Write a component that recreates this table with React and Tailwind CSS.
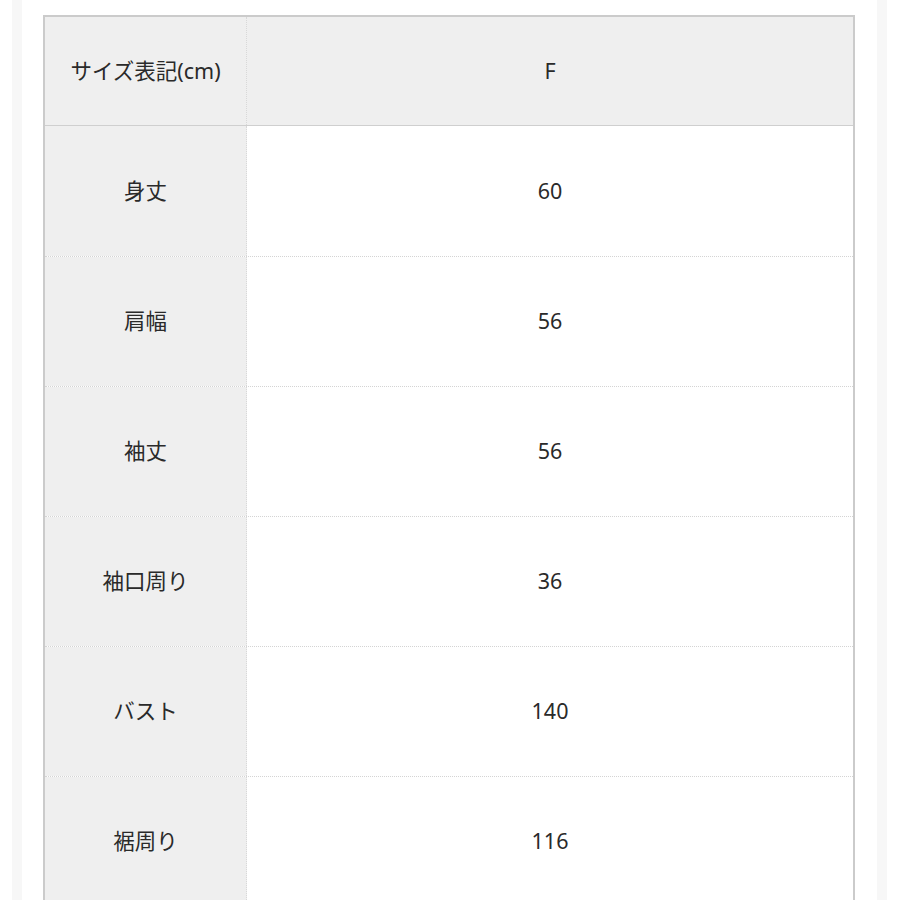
import React from 'react';

const rows = [
  ['身丈', '60'],
  ['肩幅', '56'],
  ['袖丈', '56'],
  ['袖口周り', '36'],
  ['バスト', '140'],
  ['裾周り', '116'],
];

const App = () => {
  return (
    <div
      className="w-[900px] min-h-[900px] bg-white pl-[12px] text-[#2a2a2a]"
      style={{ fontFamily: '"Noto Sans", "Noto Sans CJK JP", sans-serif' }}
    >
      <div className="w-[875px] border-x-[10px] border-[#f7f7f7] bg-white pl-[21px] pr-[22px] pt-[15px]">
        <div className="border-2 border-b-0 border-[#cbcbcb]">
          <div className="grid grid-cols-[202px_1fr] h-[109px] bg-[#efefef] border-b border-[#cfcfcf] text-[21.5px]">
            <div className="flex items-center justify-center border-r border-dotted border-[#d8d8d8]">
              サイズ表記(cm)
            </div>
            <div className="flex items-center justify-center">F</div>
          </div>
          {rows.map(([label, value], i) => (
            <div
              key={label}
              className={`grid grid-cols-[202px_1fr] h-[130px] text-[21.5px] ${
                i > 0 ? 'border-t border-dotted border-[#d4d4d4]' : ''
              }`}
            >
              <div className="flex items-center justify-center bg-[#efefef] border-r border-dotted border-[#d8d8d8]">
                {label}
              </div>
              <div className="flex items-center justify-center bg-white">{value}</div>
            </div>
          ))}
        </div>
      </div>
    </div>
  );
};

export default App;
